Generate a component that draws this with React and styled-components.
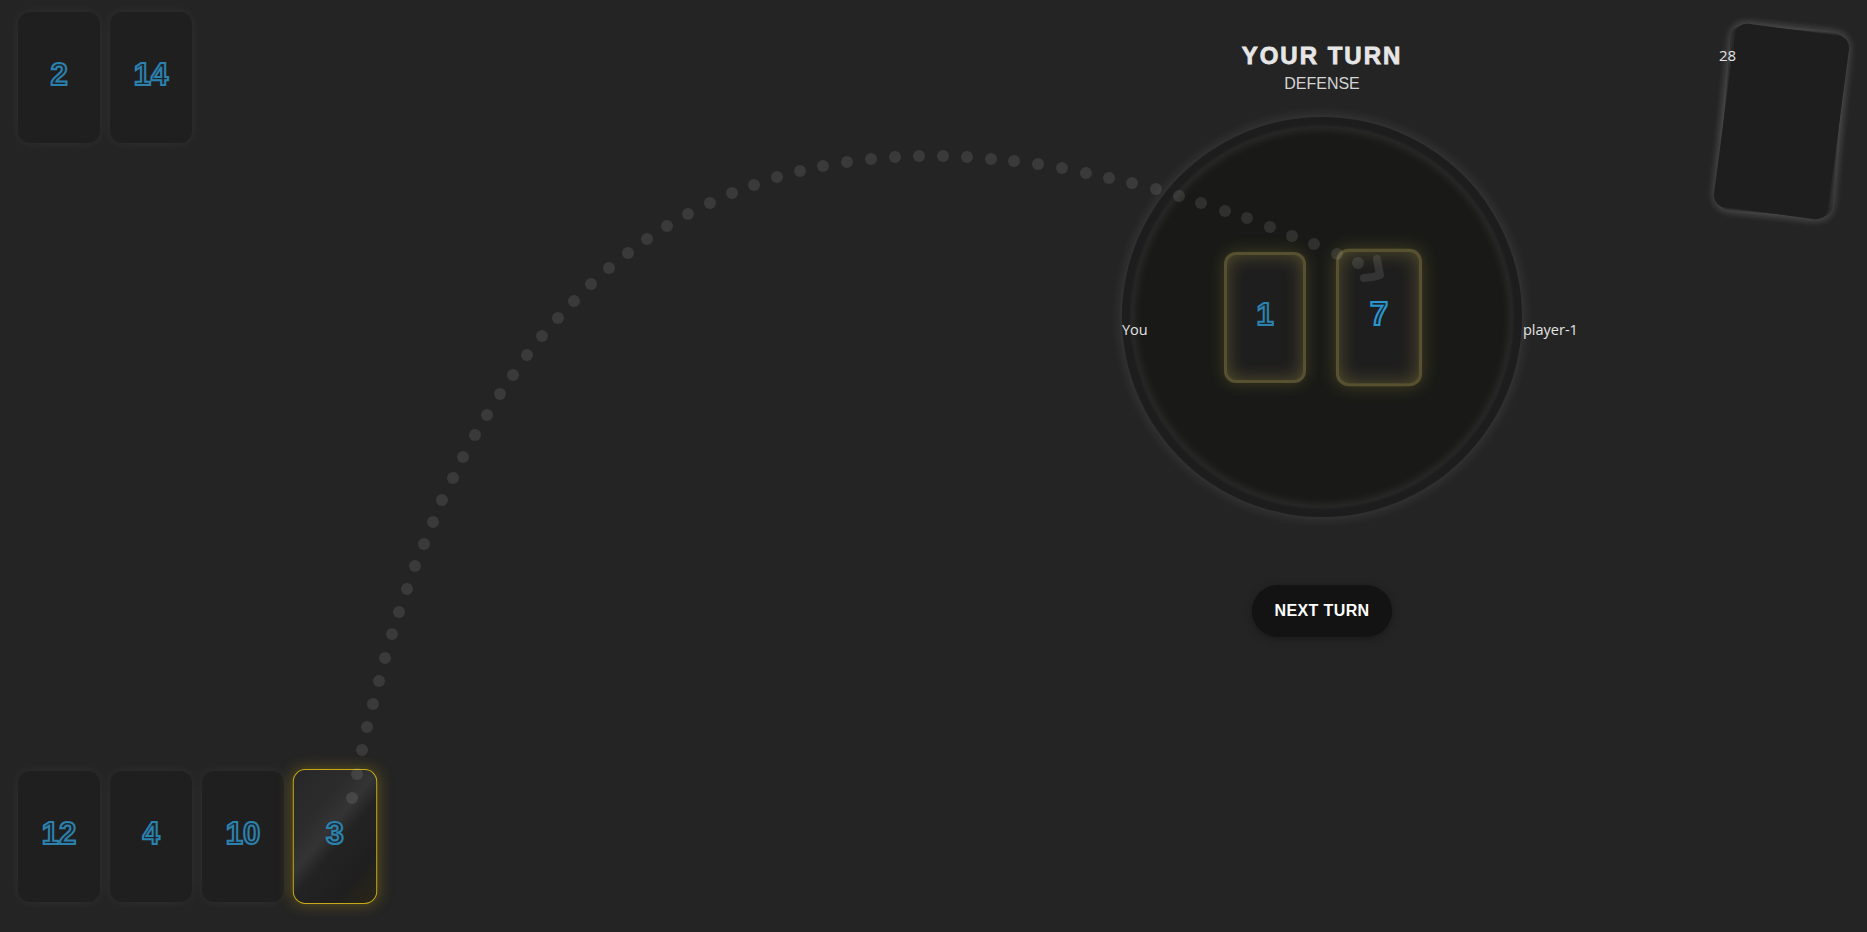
import React from 'react';
import styled, { createGlobalStyle, css } from 'styled-components';

const GlobalStyle = createGlobalStyle`
  html, body {
    margin: 0;
    padding: 0;
    background: #242424;
    font-family: "Liberation Sans", Arial, sans-serif;
    color: #e6e6e6;
  }
`;

// dots of the drag trail, from the selected card up to the table
const trail = [
  [352, 798], [357, 774], [362, 750], [367, 727], [373, 704], [379, 681], [385, 658],
  [392, 634], [399, 612], [407, 589], [415, 566], [424, 544], [433, 522], [442, 500],
  [453, 478], [463, 457], [475, 435], [487, 415], [500, 394], [513, 375], [527, 355],
  [542, 336], [558, 318], [574, 301], [591, 284], [609, 268], [628, 253], [647, 239],
  [667, 226], [688, 214], [710, 203], [732, 193], [754, 185], [777, 177], [800, 171],
  [823, 166], [847, 162], [871, 159], [895, 157], [919, 156], [943, 156], [967, 157],
  [991, 159], [1014, 161], [1038, 164], [1062, 168], [1086, 173], [1109, 178], [1132, 183],
  [1156, 189], [1179, 196], [1201, 203], [1225, 211], [1247, 218], [1270, 227], [1292, 236],
  [1314, 244], [1337, 254], [1358, 263],
];

const opponentHand = [2, 14];
const playerHand = [12, 4, 10, 3];
const selectedCard = 3;

const Game = () => {
  return (
    <Page>
      <HandsColumn>
        <Hand>
          {opponentHand.map((value) => (
            <Card key={value}>
              <CardValue>{value}</CardValue>
            </Card>
          ))}
        </Hand>
        <Hand>
          {playerHand.map((value) => (
            <Card key={value} $selected={value === selectedCard}>
              <CardValue>{value}</CardValue>
            </Card>
          ))}
        </Hand>
      </HandsColumn>

      <TableArea>
        <Center>
          <TurnTitle>YOUR TURN</TurnTitle>
          <TurnPhase>DEFENSE</TurnPhase>
          <Table>
            <SeatLabel $side="left">You</SeatLabel>
            <Felt>
              <Card $played>
                <CardValue>1</CardValue>
              </Card>
              <Card $played $latest>
                <CardValue $bright>7</CardValue>
              </Card>
            </Felt>
            <SeatLabel $side="right">player-1</SeatLabel>
          </Table>
          <NextButton>NEXT TURN</NextButton>
        </Center>

        <DeckSlot>
          <DeckStack>
            <DeckCard $angle={4.5} />
            <DeckCard $angle={6} />
            <DeckCard $angle={7.5} />
            <DeckCount>28</DeckCount>
          </DeckStack>
        </DeckSlot>
      </TableArea>

      <Trail viewBox="0 0 1867 932" preserveAspectRatio="none">
        {trail.map(([x, y]) => (
          <circle key={`${x}-${y}`} cx={x} cy={y} r="6" fill="rgba(255,255,255,0.1)" />
        ))}
        <path
          d="M1377 259 L1380 275 Q1372 278 1364 278"
          fill="none"
          stroke="rgba(255,255,255,0.1)"
          strokeWidth="8"
          strokeLinecap="round"
          strokeLinejoin="round"
        />
      </Trail>
    </Page>
  );
};

const Page = styled.div`
  position: relative;
  display: grid;
  grid-template-columns: 777px 1fr;
  height: 100vh;
  overflow: hidden;
`;

const HandsColumn = styled.div`
  display: flex;
  flex-direction: column;
  justify-content: space-between;
  padding: 12px 0 30px 18px;
`;

const Hand = styled.div`
  display: flex;
  gap: 10px;
`;

const Card = styled.div`
  width: 82px;
  height: 131px;
  border-radius: 12px;
  background: #1f1f1f;
  display: flex;
  align-items: center;
  justify-content: center;
  box-sizing: border-box;
  padding-bottom: 5px;
  box-shadow: 0 0 12px rgba(255, 255, 255, 0.06);

  ${(p) => p.$selected && css`
    transform: scale(1.03);
    border: 1.5px solid #c9a916;
    background: linear-gradient(130deg, #272727 0%, #2c2c2c 30%, #343434 44%, #232323 55%, #1f1f1f 78%, #2a2716 100%);
    box-shadow: 0 0 14px rgba(210, 175, 20, 0.35);
  `}

  ${(p) => p.$played && css`
    background: #1e1e1e;
    border: 3px solid rgba(185, 165, 80, 0.38);
    box-shadow: 0 0 16px rgba(200, 180, 80, 0.22), inset 0 0 18px rgba(200, 180, 80, 0.32);
  `}

  ${(p) => p.$latest && css`
    transform: scale(1.05);
  `}
`;

const CardValue = styled.span`
  font-family: "Liberation Sans", Arial, sans-serif;
  font-weight: 700;
  font-size: 31px;
  color: rgba(30, 40, 48, 0.9);
  -webkit-text-stroke: 2px ${(p) => (p.$bright ? '#2a96d0' : '#2c82ae')};
`;

const TableArea = styled.div`
  display: grid;
  grid-template-columns: 1fr auto 1fr;
`;

const Center = styled.div`
  grid-column: 2;
  display: flex;
  flex-direction: column;
  align-items: center;
  padding-top: 42px;
`;

const TurnTitle = styled.h1`
  margin: 0;
  font-size: 24px;
  line-height: 28px;
  font-weight: 700;
  letter-spacing: 2px;
  color: #e6e6e6;
  -webkit-text-stroke: 0.8px #e6e6e6;
`;

const TurnPhase = styled.h2`
  margin: 4px 0 0;
  font-size: 16px;
  line-height: 20px;
  font-weight: 400;
  color: #d4d4d4;
`;

const Table = styled.div`
  position: relative;
  margin-top: 23px;
  width: 400px;
  height: 400px;
  box-sizing: border-box;
  padding: 10px;
  border-radius: 50%;
  background: #1d1d1d;
  box-shadow: 0 0 14px rgba(255, 255, 255, 0.13);
`;

const Felt = styled.div`
  width: 100%;
  height: 100%;
  border-radius: 50%;
  background: #191a17;
  box-shadow: inset 0 0 12px rgba(255, 255, 255, 0.13), 0 0 4px rgba(255, 255, 255, 0.1);
  display: flex;
  align-items: center;
  justify-content: center;
  gap: 32px;
`;

const SeatLabel = styled.span`
  position: absolute;
  top: 204px;
  ${(p) => (p.$side === 'left' ? 'left: 0;' : 'left: 100%; margin-left: 1px;')}
  font-family: "Open Sans", "Liberation Sans", sans-serif;
  font-size: 14.5px;
  line-height: 18px;
  color: #e4e4e4;
  white-space: nowrap;
`;

const NextButton = styled.button`
  margin-top: 68px;
  width: 140px;
  height: 52px;
  border: none;
  border-radius: 26px;
  background: #131313;
  color: #ffffff;
  font-family: "Liberation Sans", Arial, sans-serif;
  font-size: 16px;
  font-weight: 700;
  letter-spacing: 0.4px;
  box-shadow: 0 2px 8px rgba(0, 0, 0, 0.3);
  cursor: pointer;
`;

const DeckSlot = styled.div`
  grid-column: 3;
  justify-self: end;
  padding: 29px 28px 0 0;
`;

const DeckStack = styled.div`
  position: relative;
  width: 115px;
  height: 185px;
`;

const DeckCard = styled.div`
  position: absolute;
  inset: 0;
  border-radius: 12px;
  background: #1e1e1e;
  transform: rotate(${(p) => p.$angle}deg);
  box-shadow: 0 0 12px rgba(255, 255, 255, 0.12);
`;

const DeckCount = styled.span`
  position: absolute;
  left: -5px;
  top: 17px;
  font-family: "Open Sans", "Liberation Sans", sans-serif;
  font-size: 15px;
  line-height: 18px;
  color: #e6e6e6;
`;

const Trail = styled.svg`
  position: absolute;
  inset: 0;
  width: 100%;
  height: 100%;
  pointer-events: none;
`;

export default function App() {
  return (
    <>
      <GlobalStyle />
      <Game />
    </>
  );
}
